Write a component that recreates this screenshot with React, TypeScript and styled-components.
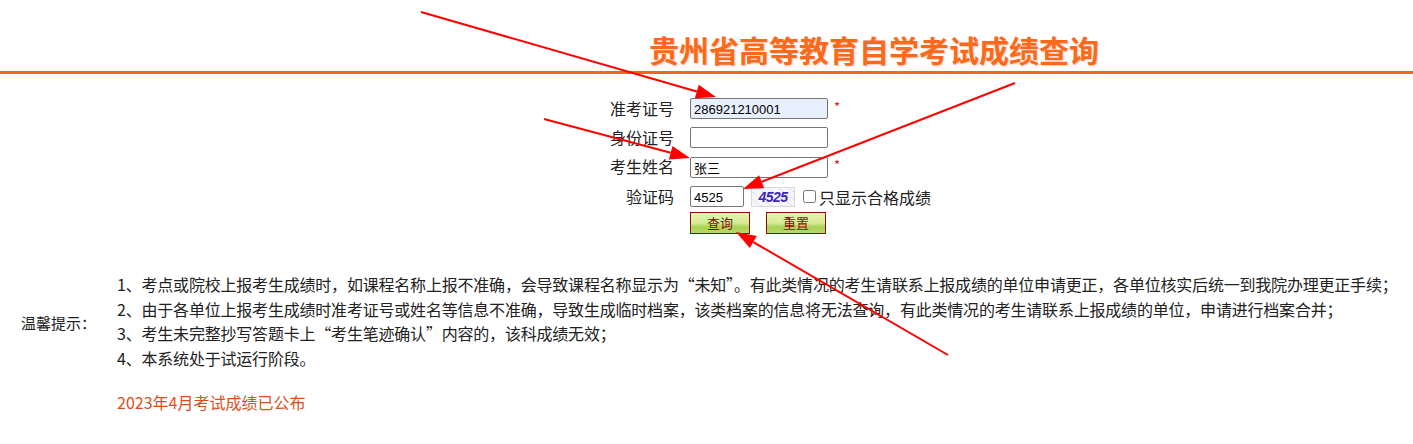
import styled, { createGlobalStyle } from 'styled-components';

const GlobalStyle = createGlobalStyle`
  html, body {
    margin: 0;
    padding: 0;
    background: #ffffff;
  }
  body {
    font-family: "Microsoft YaHei", "Noto Sans CJK SC", "Noto Sans", sans-serif;
    color: #222;
  }
`;

const Page = styled.div`
  position: relative;
  width: 1413px;
  height: 444px;
  overflow: hidden;
`;

const Header = styled.div`
  height: 74px;
  border-bottom: 3px solid #f7641d;
  display: flex;
  align-items: flex-end;
  padding-left: 649px;
  padding-bottom: 1px;
  box-sizing: border-box;
`;

const Title = styled.h1`
  margin: 0;
  font-size: 30px;
  line-height: 42px;
  font-weight: 700;
  color: #fb6a1a;
  text-shadow: 1px 1px 1px #ffd0c6;
  white-space: nowrap;
`;

const Form = styled.form`
  display: grid;
  grid-template-columns: 674px auto;
  column-gap: 16px;
  margin-top: 21px;
`;

const Label = styled.label`
  text-align: right;
  font-size: 16px;
  height: 29px;
  line-height: 27px;
`;

const Field = styled.div<{ $tall?: boolean }>`
  display: flex;
  align-items: center;
  height: ${p => (p.$tall ? 30 : 29)}px;
  padding-bottom: 2px;
  box-sizing: border-box;
`;

const TextInput = styled.input<{ $w?: number; $filled?: boolean }>`
  width: ${p => p.$w ?? 138}px;
  height: 21px;
  box-sizing: border-box;
  border: 1px solid #767676;
  border-radius: 2px;
  padding: 1px 3px 0;
  font-family: "Liberation Sans", Arial, "Noto Sans CJK SC", sans-serif;
  font-size: 13px;
  color: #000;
  background: ${p => (p.$filled ? '#e8f0fe' : '#ffffff')};
  outline: none;
`;

const Required = styled.span`
  color: #e02020;
  font-size: 13px;
  margin-left: 6px;
  align-self: flex-start;
  margin-top: 2px;
`;

const Captcha = styled.span`
  margin-left: 7px;
  width: 44px;
  height: 20px;
  box-sizing: border-box;
  border: 1px solid #d8d8d8;
  background:
    repeating-linear-gradient(35deg, transparent 0 5px, rgba(180, 180, 220, 0.25) 5px 6px),
    #f7f7fb;
  display: flex;
  align-items: center;
  justify-content: center;
  font-family: "Liberation Sans", Arial, sans-serif;
  font-style: italic;
  font-weight: 700;
  font-size: 14px;
  color: #3a28b8;
  letter-spacing: -0.5px;
`;

const CheckLabel = styled.label`
  display: flex;
  align-items: center;
  margin-left: 8px;
  font-size: 16px;
  cursor: pointer;

  input {
    margin: 0 3px 0 0;
    width: 13px;
    height: 13px;
  }
`;

const Buttons = styled.div`
  display: flex;
  gap: 16px;
`;

const Button = styled.button`
  width: 60px;
  height: 22px;
  border: 1px solid #8a0d0d;
  background: linear-gradient(#e8f2b0 0%, #d9ea95 50%, #a9d156 70%, #b7d96a 100%);
  color: #8a0d0d;
  font-family: "Noto Sans CJK SC", sans-serif;
  font-size: 13px;
  line-height: 18px;
  padding: 0;
  cursor: pointer;
`;

const Tips = styled.section`
  display: grid;
  grid-template-columns: 96px auto;
  align-items: center;
  padding-left: 21px;
  margin-top: 38px;
`;

const TipsTitle = styled.div`
  font-size: 15px;
  padding-top: 2px;
`;

const TipList = styled.div`
  font-size: 16px;
  line-height: 24.6px;
  letter-spacing: -0.2px;
  white-space: nowrap;
`;

const Notice = styled.p`
  margin: 20px 0 0 117px;
  font-size: 16px;
  color: #d9501e;
  line-height: 24px;
`;

const Overlay = styled.svg`
  position: absolute;
  left: 0;
  top: 0;
  pointer-events: none;
`;

type Arrow = { x1: number; y1: number; x2: number; y2: number };

const arrows: Arrow[] = [
  { x1: 421, y1: 12, x2: 716, y2: 97 },
  { x1: 544, y1: 119, x2: 690, y2: 158 },
  { x1: 1015, y1: 83, x2: 743, y2: 189 },
  { x1: 948, y1: 355, x2: 736, y2: 232 },
];

function head(a: Arrow) {
  const ang = Math.atan2(a.y2 - a.y1, a.x2 - a.x1);
  const len = 20;
  const half = 7;
  const bx = a.x2 - len * Math.cos(ang);
  const by = a.y2 - len * Math.sin(ang);
  const px = -Math.sin(ang) * half;
  const py = Math.cos(ang) * half;
  return {
    points: `${a.x2},${a.y2} ${bx + px},${by + py} ${bx - px},${by - py}`,
    bx,
    by,
  };
}

const Arrows = () => (
  <Overlay width="1413" height="444" viewBox="0 0 1413 444">
    {arrows.map((a, i) => {
      const h = head(a);
      return (
        <g key={i}>
          <line x1={a.x1} y1={a.y1} x2={h.bx} y2={h.by} stroke="#ff0000" strokeWidth="2" />
          <polygon points={h.points} fill="#ff0000" />
        </g>
      );
    })}
  </Overlay>
);

export default function App() {
  return (
    <Page>
      <GlobalStyle />
      <Header>
        <Title>贵州省高等教育自学考试成绩查询</Title>
      </Header>

      <Form onSubmit={e => e.preventDefault()}>
        <Label htmlFor="zkz">准考证号</Label>
        <Field>
          <TextInput id="zkz" $filled defaultValue="286921210001" />
          <Required>*</Required>
        </Field>

        <Label htmlFor="sfz">身份证号</Label>
        <Field>
          <TextInput id="sfz" />
        </Field>

        <Label htmlFor="xm">考生姓名</Label>
        <Field $tall>
          <TextInput id="xm" defaultValue="张三" />
          <Required>*</Required>
        </Field>

        <Label htmlFor="yzm">验证码</Label>
        <Field>
          <TextInput id="yzm" $w={54} defaultValue="4525" />
          <Captcha>4525</Captcha>
          <CheckLabel>
            <input type="checkbox" />
            只显示合格成绩
          </CheckLabel>
        </Field>

        <span />
        <Buttons>
          <Button type="submit">查询</Button>
          <Button type="reset">重置</Button>
        </Buttons>
      </Form>

      <Tips>
        <TipsTitle>温馨提示：</TipsTitle>
        <TipList>
          <div>1、考点或院校上报考生成绩时，如课程名称上报不准确，会导致课程名称显示为“未知”。有此类情况的考生请联系上报成绩的单位申请更正，各单位核实后统一到我院办理更正手续；</div>
          <div>2、由于各单位上报考生成绩时准考证号或姓名等信息不准确，导致生成临时档案，该类档案的信息将无法查询，有此类情况的考生请联系上报成绩的单位，申请进行档案合并；</div>
          <div>3、考生未完整抄写答题卡上“考生笔迹确认”内容的，该科成绩无效；</div>
          <div>4、本系统处于试运行阶段。</div>
        </TipList>
      </Tips>

      <Notice>2023年4月考试成绩已公布</Notice>

      <Arrows />
    </Page>
  );
}
